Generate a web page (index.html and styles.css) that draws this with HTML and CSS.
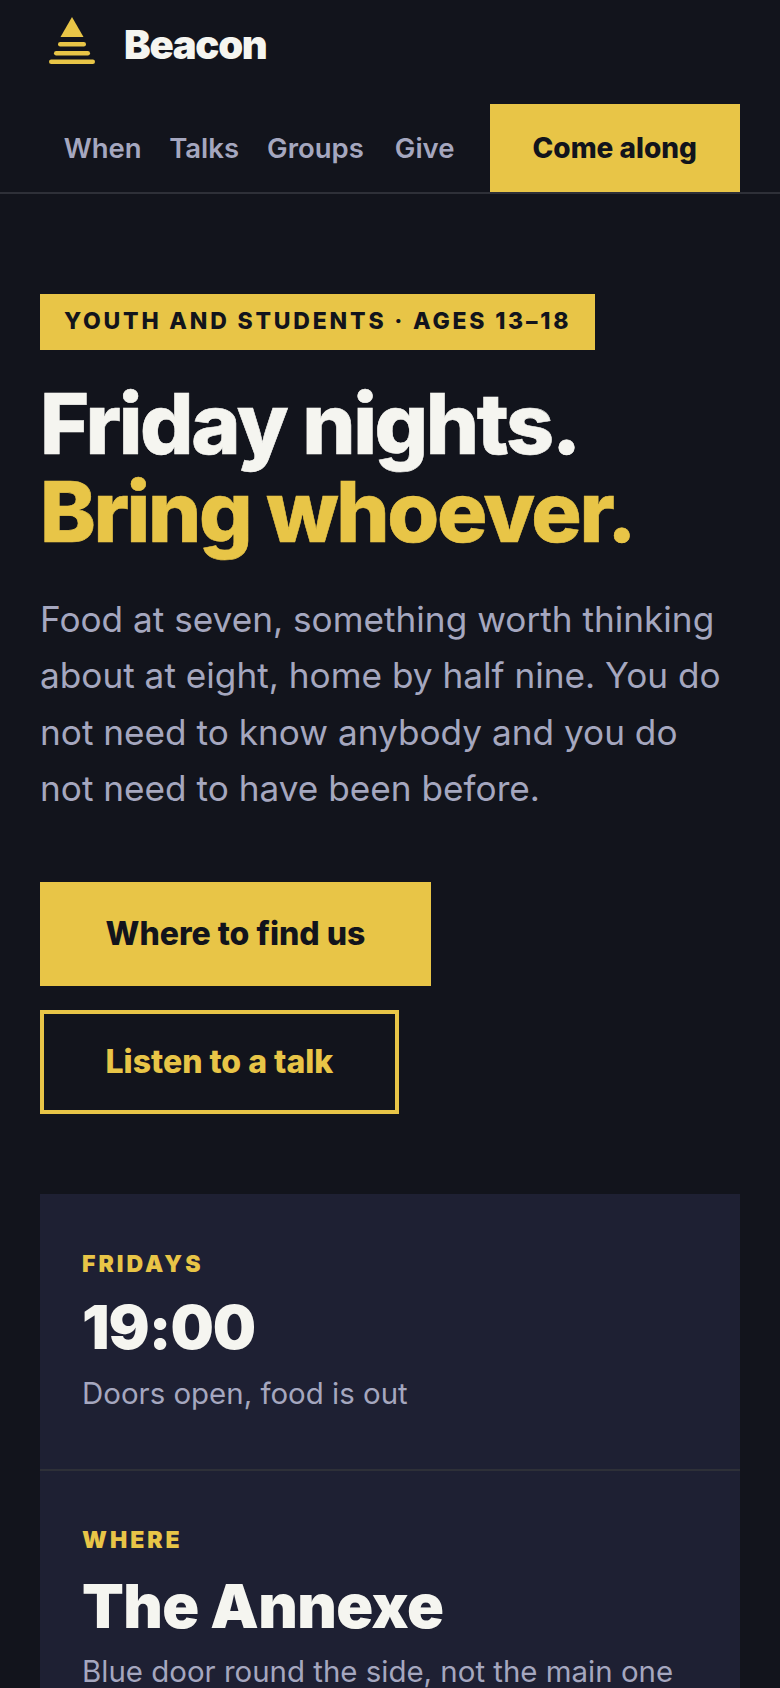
FILE: index.html
```html
<!DOCTYPE html>
<html lang="en">
<head>
<meta charset="utf-8">
<title>Beacon</title>
<link rel="stylesheet" href="styles.css">
</head>
<body>
<header class="site-header">
  <a class="brand" href="#">
    <svg class="brand-mark" viewBox="0 0 46 47" aria-hidden="true">
      <polygon points="23,0 34.500,20 11.500,20" fill="#e8c547"/>
      <rect x="9" y="25" width="28" height="4.500" rx="2.200" fill="#e8c547"/>
      <rect x="5" y="34" width="36" height="4.500" rx="2.200" fill="#e8c547"/>
      <rect x="0" y="42.500" width="46" height="4.500" rx="2.200" fill="#e8c547"/>
    </svg>
    <span class="brand-name">Beacon</span>
  </a>
  <nav class="nav">
    <a class="nav-link" href="#">When</a>
    <a class="nav-link" href="#">Talks</a>
    <a class="nav-link" href="#">Groups</a>
    <a class="nav-link" href="#">Give</a>
    <a class="nav-cta" href="#">Come along</a>
  </nav>
</header>
<main class="main">
  <section class="hero">
    <p class="badge">YOUTH AND STUDENTS · AGES 13–18</p>
    <h1 class="title">Friday nights.<br><span class="title-accent">Bring whoever.</span></h1>
    <p class="lede">Food at seven, something worth thinking about at eight, home by half nine. You do not need to know anybody and you do not need to have been before.</p>
    <div class="actions">
      <a class="btn btn-solid" href="#">Where to find us</a>
      <a class="btn btn-outline" href="#">Listen to a talk</a>
    </div>
  </section>
  <section class="panel">
    <div class="panel-row">
      <p class="panel-label">FRIDAYS</p>
      <p class="panel-value">19:00</p>
      <p class="panel-note">Doors open, food is out</p>
    </div>
    <div class="panel-row panel-row-next">
      <p class="panel-label">WHERE</p>
      <p class="panel-value panel-value-text">The Annexe</p>
      <p class="panel-note">Blue door round the side, not the main one</p>
    </div>
  </section>
</main>
</body>
</html>
```
FILE: styles.css
```css
* { box-sizing: border-box; }
html, body { margin: 0; height: 1688px; overflow: hidden; }
body {
  background: #12141c;
  color: #f5f5f0;
  font-family: Inter, "Liberation Sans", sans-serif;
}
a { text-decoration: none; color: inherit; }
p, h1 { margin: 0; }

.site-header {
  border-bottom: 2px solid #2e3038;
  padding: 0 40px;
}
.brand {
  display: flex;
  align-items: center;
  gap: 29px;
  height: 88px;
  padding: 0 9px;
  margin-bottom: 16px;
}
.brand-mark { width: 46px; height: 47px; margin-bottom: 7px; }
.brand-name {
  font-size: 40px;
  font-weight: 900;
  letter-spacing: -1.300px;
}
.nav {
  display: flex;
  align-items: center;
  justify-content: flex-end;
  height: 88px;
}
.nav-link {
  font-size: 27.500px;
  font-weight: 600;
  color: #a5a7bf;
  margin-right: 28px;
}
.nav-link:nth-child(1) { margin-right: 27.500px; }
.nav-link:nth-child(3) { margin-right: 31px; }
.nav-link:nth-child(4) { margin-right: 35px; }
.nav-cta {
  display: flex;
  align-items: center;
  height: 88px;
  padding: 0 43px;
  background: #e8c547;
  color: #12141c;
  font-size: 28px;
  font-weight: 800;
}

.main { padding: 100px 40px 0; }
.badge {
  display: inline-block;
  height: 56px;
  line-height: 54px;
  padding: 0 24px;
  background: #e8c547;
  color: #12141c;
  font-size: 23px;
  font-weight: 800;
  letter-spacing: 2.800px;
}
.title {
  margin-top: 30px;
  font-size: 84px;
  font-weight: 800;
  line-height: 88px;
  letter-spacing: -2.400px;
  -webkit-text-stroke: 0.600px currentColor;
}
.title-accent { color: #e8c547; }
.lede {
  margin-top: 35px;
  font-size: 35.200px;
  line-height: 56.400px;
  color: #a5a7bf;
}
.actions {
  display: flex;
  flex-direction: column;
  align-items: flex-start;
  gap: 24px;
  margin-top: 65px;
}
.btn {
  display: flex;
  align-items: center;
  height: 104px;
  font-size: 32px;
  font-weight: 800;
}
.btn-solid {
  padding: 0 65.500px;
  background: #e8c547;
  color: #12141c;
}
.btn-outline {
  padding: 0 61.500px;
  border: 4px solid #e8c547;
  color: #e8c547;
}
.panel {
  margin-top: 80px;
  background: #1e2033;
}
.panel-row {
  padding: 56px 42px 52px;
  border-bottom: 2px solid #2e3038;
}
.panel-row-next { padding-top: 55px; }
.panel-label {
  font-size: 23px;
  font-weight: 900;
  letter-spacing: 3px;
  color: #e8c547;
}
.panel-value {
  margin-top: 11px;
  font-size: 61px;
  font-weight: 900;
  line-height: 76px;
  letter-spacing: -1px;
}
.panel-value-text { margin-top: 14px; letter-spacing: -0.600px; }
.panel-note {
  margin-top: 5px;
  font-size: 29.440px;
  line-height: 47px;
  color: #a5a7bf;
}
.panel-value-text + .panel-note { margin-top: 4px; }
```
